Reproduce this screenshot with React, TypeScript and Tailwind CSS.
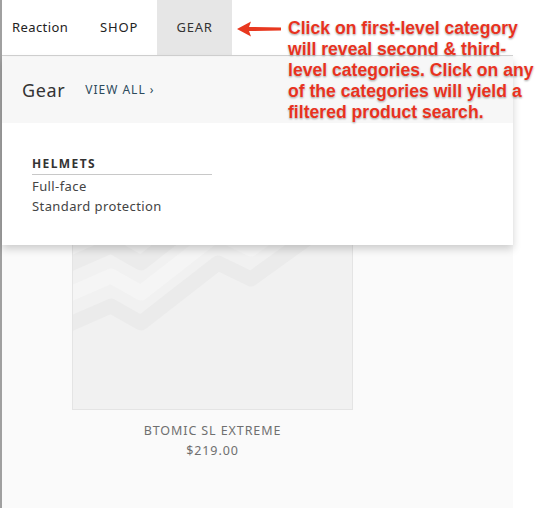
import React from "react";

// chevron bands on the placeholder image, shifted up by dy
const band = (dy: number) =>
  [
    [-10, 196],
    [38, 175],
    [68, 192],
    [145, 132],
    [178, 148],
    [300, 60],
  ]
    .map(([x, y]) => `${x},${y + dy}`)
    .join(" ");

const Zigzag = () => (
  <svg className="absolute inset-0" width="280" height="280" viewBox="0 0 280 280">
    <g fill="none" strokeWidth="15" strokeLinejoin="round">
      <polyline points={band(-30)} stroke="#f5f5f5" />
      <polyline points={band(-90)} stroke="#f5f5f5" />
      <polyline points={band(0)} stroke="#ebebeb" />
      <polyline points={band(-60)} stroke="#ebebeb" />
      <polyline points={band(-120)} stroke="#ebebeb" />
    </g>
  </svg>
);

const Annotation = () => (
  <>
    <svg
      className="absolute left-[236px] top-[20px]"
      width="46"
      height="18"
      viewBox="0 0 46 18"
    >
      <path d="M1 9 L15 1.5 L13 7 L45 7.5 L45 10.5 L13 11 L15 16.5 Z" fill="#e8381f" />
    </svg>
    <div className="absolute left-[288px] top-[18px] whitespace-nowrap font-['Liberation_Sans',Arial,sans-serif] text-[17.6px] font-bold leading-[21px] text-[#e8321e] [text-shadow:0_0_2px_#fff,0_1px_2px_rgba(0,0,0,0.45)]">
      Click on first-level category
      <br />
      will reveal second &amp; third-
      <br />
      level categories. Click on any
      <br />
      of the categories will yield a
      <br />
      filtered product search.
    </div>
  </>
);

export default function App() {
  return (
    <div className="relative flex h-[508px] w-[548px] overflow-hidden bg-white font-['Noto_Sans',sans-serif]">
      <div className="flex w-[513px] flex-col border-l-2 border-[#a0a0a0]">
        <nav className="flex h-[56px] items-stretch border-b border-[#d2d2d2] bg-white text-[13px] text-[#222]">
          <div className="flex items-center pl-[10px] pr-[32px] tracking-[0.4px]">Reaction</div>
          <div className="flex items-center pr-[19px] tracking-[0.8px]">SHOP</div>
          <div className="flex w-[75px] items-center justify-center bg-[#e6e6e6] tracking-[0.8px] text-[#333]">
            GEAR
          </div>
        </nav>
        <main className="flex-1 bg-[#fafafa] pl-[70px] pt-[74px]">
          <div className="relative h-[280px] w-[281px] overflow-hidden border border-[#e4e4e4] bg-[#f1f1f1]">
            <Zigzag />
          </div>
          <div className="w-[281px] pt-[11px] text-center text-[12.5px] leading-[20px] tracking-[0.9px] text-[#6f6f6f]">
            <div>BTOMIC SL EXTREME</div>
            <div>$219.00</div>
          </div>
        </main>
      </div>

      <div className="absolute left-[2px] top-[57px] w-[511px] bg-white shadow-[0_4px_8px_rgba(0,0,0,0.18)]">
        <div className="flex h-[66px] items-center gap-[20px] bg-[#f7f7f7] pl-[20px]">
          <span className="text-[18px] tracking-[0.6px] text-[#333]">Gear</span>
          <span className="text-[12px] tracking-[1px] text-[#2d4a5c]">VIEW ALL ›</span>
        </div>
        <div className="h-[122px] pl-[30px] pt-[32px]">
          <div className="w-[180px] border-b border-[#c8c8c8] pb-[1px] text-[12px] font-bold tracking-[1.4px] text-[#333]">
            HELMETS
          </div>
          <div className="pt-[1px] text-[13px] leading-[20px] tracking-[0.4px] text-[#444]">
            <div>Full-face</div>
            <div>Standard protection</div>
          </div>
        </div>
      </div>

      <Annotation />
    </div>
  );
}
